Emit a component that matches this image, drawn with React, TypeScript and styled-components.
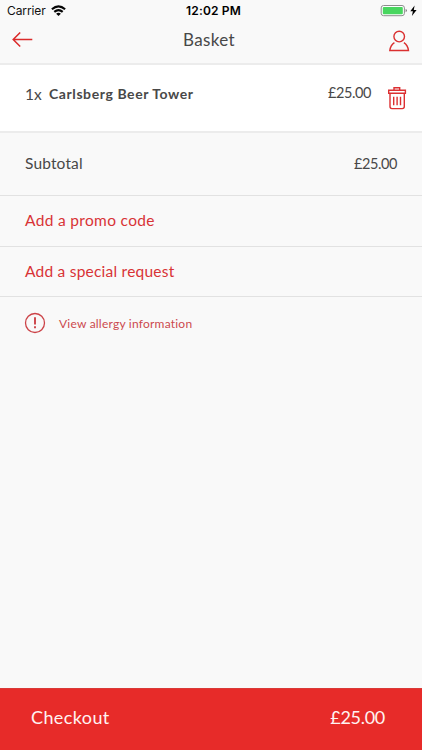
import React from "react";
import styled, { createGlobalStyle } from "styled-components";

const GlobalStyle = createGlobalStyle`
  * { box-sizing: border-box; }
  body { margin: 0; background: #f9f9f9; }
`;

const Screen = styled.div`
  width: 422px;
  height: 750px;
  display: flex;
  flex-direction: column;
  background: #f9f9f9;
  color: #484848;
  font-family: Lato, "Open Sans", sans-serif;
  overflow: hidden;
`;

const Header = styled.header`
  height: 65px;
  flex: none;
  border-bottom: 2px solid #ececec;
`;

const StatusBar = styled.div`
  height: 22px;
  display: grid;
  grid-template-columns: 1fr auto 1fr;
  align-items: center;
  padding: 0 5px 0 7px;
  color: #111;
  font-family: Inter, "Liberation Sans", sans-serif;
  svg { display: block; }
`;

const Carrier = styled.div`
  display: flex;
  align-items: center;
  gap: 5px;
  font-size: 12px;
  letter-spacing: -0.1px;
  line-height: 22px;
`;

const Clock = styled.div`
  font-size: 12px;
  font-weight: 600;
  line-height: 22px;
  letter-spacing: 0.15px;
  padding-left: 3px;
  color: #000;
`;

const Power = styled.div`
  display: flex;
  justify-content: flex-end;
`;

const NavBar = styled.nav`
  height: 36px;
  display: grid;
  grid-template-columns: 1fr auto 1fr;
  align-items: center;
  padding: 0 12px;
  svg { display: block; }
`;

const Title = styled.h1`
  margin: 0;
  padding-right: 4px;
  font-size: 17px;
  font-weight: 400;
  line-height: 36px;
  letter-spacing: 0.35px;
`;

const IconButton = styled.button<{ $end?: boolean }>`
  padding: ${(p) => (p.$end ? "2px 0 0" : "0")};
  border: 0;
  background: none;
  justify-self: ${(p) => (p.$end ? "end" : "start")};
`;

const Item = styled.section`
  height: 68px;
  flex: none;
  display: flex;
  align-items: flex-start;
  padding: 16px 15px 0 25px;
  background: #fff;
  border-bottom: 2px solid #ececec;
  line-height: 24px;
`;

const Quantity = styled.span`
  width: 24px;
  padding-top: 1px;
  font-size: 15.5px;
`;

const ItemName = styled.span`
  flex: 1;
  padding-top: 1px;
  font-size: 14px;
  font-weight: 700;
  letter-spacing: 0.58px;
`;

const Price = styled.span<{ $gap?: number }>`
  font-size: 14.5px;
  margin-right: ${(p) => p.$gap ?? 0}px;
  letter-spacing: -0.4px;
`;

const DeleteButton = styled.button`
  padding: 0;
  border: 0;
  margin-top: 5px;
  background: none;
  svg { display: block; }
`;

const Row = styled.div<{ $height: number }>`
  height: ${(p) => p.$height}px;
  flex: none;
  display: flex;
  align-items: center;
  justify-content: space-between;
  padding: 0 25px 2px;
  border-bottom: 1px solid #e2e2e2;
  font-size: 15.5px;
`;

const Subtotal = styled.span`
  letter-spacing: 0.15px;
`;

const ActionLabel = styled.span<{ $spacing: number }>`
  color: #d83336;
  letter-spacing: ${(p) => p.$spacing}px;
`;

const Allergy = styled.div`
  flex: 1;
  display: flex;
  align-items: flex-start;
  gap: 13px;
  padding: 15px 24px;
  color: #cc494e;
  font-size: 12px;
  line-height: 23px;
  letter-spacing: 0.22px;
`;

const Checkout = styled.button`
  height: 62px;
  flex: none;
  display: flex;
  align-items: center;
  justify-content: space-between;
  padding: 0 37px 6px 31px;
  border: 0;
  border-top: 1px solid #d93a38;
  background: #e72b29;
  color: #fff3f2;
  font: 400 18px Lato, "Open Sans", sans-serif;
`;

const CheckoutText = styled.span<{ $spacing: number }>`
  letter-spacing: ${(p) => p.$spacing}px;
`;

const Wifi = () => (
  <svg width="15" height="12" viewBox="0 0 15 12" fill="none" stroke="#050505" strokeWidth="2.1">
    <path d="M.9 4.3Q7.5-1.7 14.1 4.3" />
    <path d="M3.3 6.9Q7.5 3.2 11.7 6.9" />
    <path d="M5.1 8.7Q7.5 6.7 9.9 8.7L7.5 11Z" fill="#050505" stroke="none" />
  </svg>
);

const Battery = () => (
  <svg width="37" height="14" viewBox="0 0 37 14">
    <rect x="1.2" y="1.5" width="23.2" height="10.2" rx="2.4" fill="#fff" stroke="#8d8d8d" />
    <rect x="2.8" y="3" width="20" height="7.2" rx="1" fill="#48d65f" />
    <path d="M25.6 4.9q1.3.4 1.3 1.7t-1.3 1.7z" fill="#777" />
    <path d="M34.6 1.5 30.3 7.2h2.6l-1 4.7 4.7-6h-2.8z" fill="#000" />
  </svg>
);

const BackArrow = () => (
  <svg width="21" height="16" viewBox="0 0 21 16" fill="none" stroke="#db2b2b" strokeWidth="1.5">
    <path d="M20.3 7.5H1.2M8.2.5l-7 7 7 7" />
  </svg>
);

const Person = () => (
  <svg width="22" height="22" viewBox="0 0 22 22" fill="none" stroke="#da3030" strokeWidth="1.4">
    <circle cx="11.2" cy="6.6" r="5.3" />
    <path d="M6.4 12.7C4 14.2 2.4 16.6 1.8 20.5h18.7c-.6-3.9-2.2-6.3-4.6-7.8" />
  </svg>
);

const Trash = () => (
  <svg width="20" height="24" viewBox="0 0 20 24" fill="none" stroke="#dc3032" strokeWidth="1.4">
    <path d="M1.7 4.3h16.7v3H1.7zM7 4.2V1.8h5.7v2.4M3 7.4v13.2q0 2 2 2h10.3q2 0 2-2V7.4" />
    <path d="M6.7 10.7v8.6M10.1 10.7v8.6M13.5 10.7v8.6" />
  </svg>
);

const Warning = () => (
  <svg width="22" height="22" viewBox="0 0 22 22" fill="none" stroke="#cc4348" strokeWidth="1.3">
    <circle cx="11" cy="11" r="9.5" />
    <path d="M11 5.2v7.4M11 14.3v2" strokeWidth="1.9" />
  </svg>
);

export default function App() {
  return (
    <>
      <GlobalStyle />
      <Screen>
        <Header>
          <StatusBar>
            <Carrier>Carrier <Wifi /></Carrier>
            <Clock>12:02 PM</Clock>
            <Power><Battery /></Power>
          </StatusBar>
          <NavBar>
            <IconButton aria-label="Back"><BackArrow /></IconButton>
            <Title>Basket</Title>
            <IconButton $end aria-label="Account"><Person /></IconButton>
          </NavBar>
        </Header>
        <Item>
          <Quantity>1x</Quantity>
          <ItemName>Carlsberg Beer Tower</ItemName>
          <Price $gap={16}>£25.00</Price>
          <DeleteButton aria-label="Remove item"><Trash /></DeleteButton>
        </Item>
        <Row $height={63}>
          <Subtotal>Subtotal</Subtotal>
          <Price>£25.00</Price>
        </Row>
        <Row $height={51}><ActionLabel $spacing={0.33}>Add a promo code</ActionLabel></Row>
        <Row $height={50}><ActionLabel $spacing={0.23}>Add a special request</ActionLabel></Row>
        <Allergy><Warning />View allergy information</Allergy>
        <Checkout>
          <CheckoutText $spacing={0.4}>Checkout</CheckoutText>
          <CheckoutText $spacing={-0.3}>£25.00</CheckoutText>
        </Checkout>
      </Screen>
    </>
  );
}
